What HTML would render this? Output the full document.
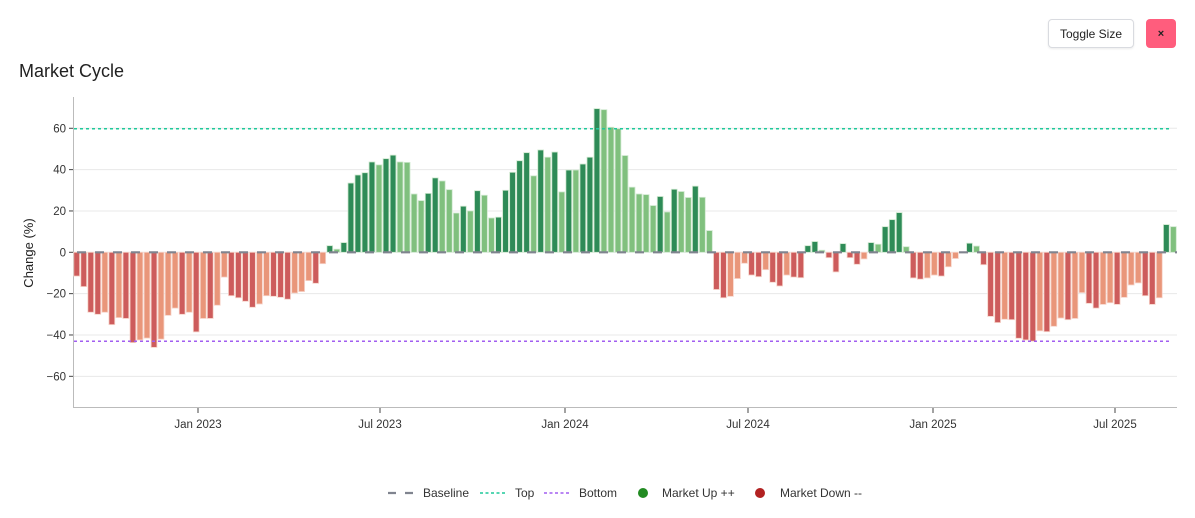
<!DOCTYPE html>
<html><head><meta charset="utf-8"><style>
body{margin:0;width:1195px;height:518px;background:#fff;font-family:"Liberation Sans",sans-serif;overflow:hidden;position:relative}
.btn{position:absolute;top:19px;height:29px;box-sizing:border-box;border-radius:4px;font-size:12px;display:flex;align-items:center;justify-content:center}
#tg{left:1048px;width:86px;border:1px solid #d9dbe0;color:#222;background:#fff;box-shadow:0 1px 2px rgba(0,0,0,.08)}
#cl{left:1146px;width:30px;background:#ff5d7d;color:#222;font-size:11px;font-weight:bold}
#title{position:absolute;left:19px;top:61px;font-size:18px;color:#222}
</style></head><body>
<div class="btn" id="tg">Toggle Size</div>
<div class="btn" id="cl">×</div>
<div id="title">Market Cycle</div>
<svg id="c" width="1195" height="518" style="position:absolute;left:0;top:0" font-family="Liberation Sans, sans-serif"></svg>
<script>
const v=[-11.5,-16.6,-29,-30,-29,-35,-31.6,-32,-43.7,-42.4,-41.5,-46,-42,-30.5,-27,-30,-29,-38.5,-32,-32,-25.6,-12,-21,-22,-23.7,-26.6,-25,-21,-21.3,-21.8,-22.7,-19.7,-19,-13.7,-15,-5.5,3.2,1.5,4.7,33.5,37.4,38.5,43.7,42.3,45.3,47,43.7,43.5,28.2,25,28.5,36,34.5,30.3,19,22.3,20,29.8,27.6,16.6,17,30,38.7,44.3,48.2,37,49.5,46,48.5,29.2,39.8,39.8,42.7,46,69.5,69,60.5,59.8,46.8,31.5,28.2,27.9,22.6,27,19.5,30.5,29.4,26.5,32,26.6,10.5,-18,-22,-21.3,-12.7,-5.3,-11,-11.8,-8.4,-14.5,-16.3,-11,-12,-12.3,3.2,5.2,1,-2.6,-9.5,4.2,-2.6,-5.8,-3.2,4.7,3.9,12.4,15.8,19.2,2.7,-12.4,-13,-12.4,-11,-11.5,-7,-3,0,4.4,3,-6,-31,-34,-32.4,-32.6,-41.6,-42.4,-43,-38,-38.4,-35.8,-31.8,-32.6,-32,-19.5,-24.7,-27,-25.2,-24.4,-25.2,-21.8,-15.8,-14.8,-21,-25.2,-22,13.4,12.4];
const d="ddddldlddl"+"ldllldldld"+"llddddlldd"+"dllldldldd"+"dddlddllll"+"ddllldldll"+"dddddldldl"+"dldddlllll"+"llldldlldl"+"lddlllddld"+"dlddddlddd"+"ddldldddld"+"dlldllldld"+"ddlddddldl"+"ldllddlldl"+"llddldl";
const Y=x=>252.3-2.067*x;let s='';
[60,40,20,0,-20,-40,-60].forEach(t=>{const y=Y(t);s+=`<line x1="74" x2="1177" y1="${y}" y2="${y}" stroke="#e8e8e8"/><line x1="69" x2="74" y1="${y}" y2="${y}" stroke="#444"/><text x="66" y="${y+4}" font-size="11.5" fill="#333" text-anchor="end">${t<0?'−'+(-t):t}</text>`});
s+=`<line x1="73.5" x2="73.5" y1="97" y2="408" stroke="#bbb"/><line x1="73" x2="1177" y1="407.5" y2="407.5" stroke="#bbb"/>`;
[[198,'Jan 2023'],[380,'Jul 2023'],[565,'Jan 2024'],[748,'Jul 2024'],[933,'Jan 2025'],[1115,'Jul 2025']].forEach(([x,t])=>{s+=`<line x1="${x}" x2="${x}" y1="408" y2="413" stroke="#444"/><text x="${x}" y="428" font-size="11.5" fill="#333" text-anchor="middle">${t}</text>`});
v.forEach((a,i)=>{const x=76.7+i*7.03;const pos=a>=0;const dk=d[i]!='l';const c=pos?(dk?'#2e8b57':'#80c07e'):(dk?'#cd5c5c':'#e9967a');const st=pos?'#cfe8cf':'#f6d3c9';const y0=Y(0),y1=Y(a);s+=`<rect x="${x-2.9}" y="${Math.min(y0,y1)}" width="5.8" height="${Math.abs(y1-y0)}" fill="${c}" stroke="${st}" stroke-width="0.8"/>`});
s+=`<line x1="77" x2="1177" y1="252.3" y2="252.3" stroke="#80848f" stroke-width="2.2" stroke-dasharray="9 9"/>`;
s+=`<line x1="74" x2="1172" y1="128.7" y2="128.7" stroke="#1fc99a" stroke-width="1.5" stroke-dasharray="3 3"/>`;
s+=`<line x1="74" x2="1172" y1="341.3" y2="341.3" stroke="#a25ef0" stroke-width="1.5" stroke-dasharray="3 3"/>`;
s+=`<text transform="translate(33,253) rotate(-90)" font-size="13" fill="#222" text-anchor="middle">Change (%)</text>`;
s+=`<line x1="388" x2="414" y1="493" y2="493" stroke="#80848f" stroke-width="2.2" stroke-dasharray="8 9"/><text x="423" y="497" font-size="12" fill="#333">Baseline</text>`;
s+=`<line x1="480" x2="507" y1="493" y2="493" stroke="#1fc99a" stroke-width="1.5" stroke-dasharray="3 2.5"/><text x="515" y="497" font-size="12" fill="#333">Top</text>`;
s+=`<line x1="544" x2="571" y1="493" y2="493" stroke="#a25ef0" stroke-width="1.5" stroke-dasharray="3 2.5"/><text x="579" y="497" font-size="12" fill="#333">Bottom</text>`;
s+=`<circle cx="643" cy="493" r="5" fill="#228b22"/><text x="662" y="497" font-size="12" fill="#333">Market Up ++</text>`;
s+=`<circle cx="760" cy="493" r="5" fill="#b22222"/><text x="780" y="497" font-size="12" fill="#333">Market Down --</text>`;
document.getElementById('c').innerHTML=s;
</script>
</body></html>
